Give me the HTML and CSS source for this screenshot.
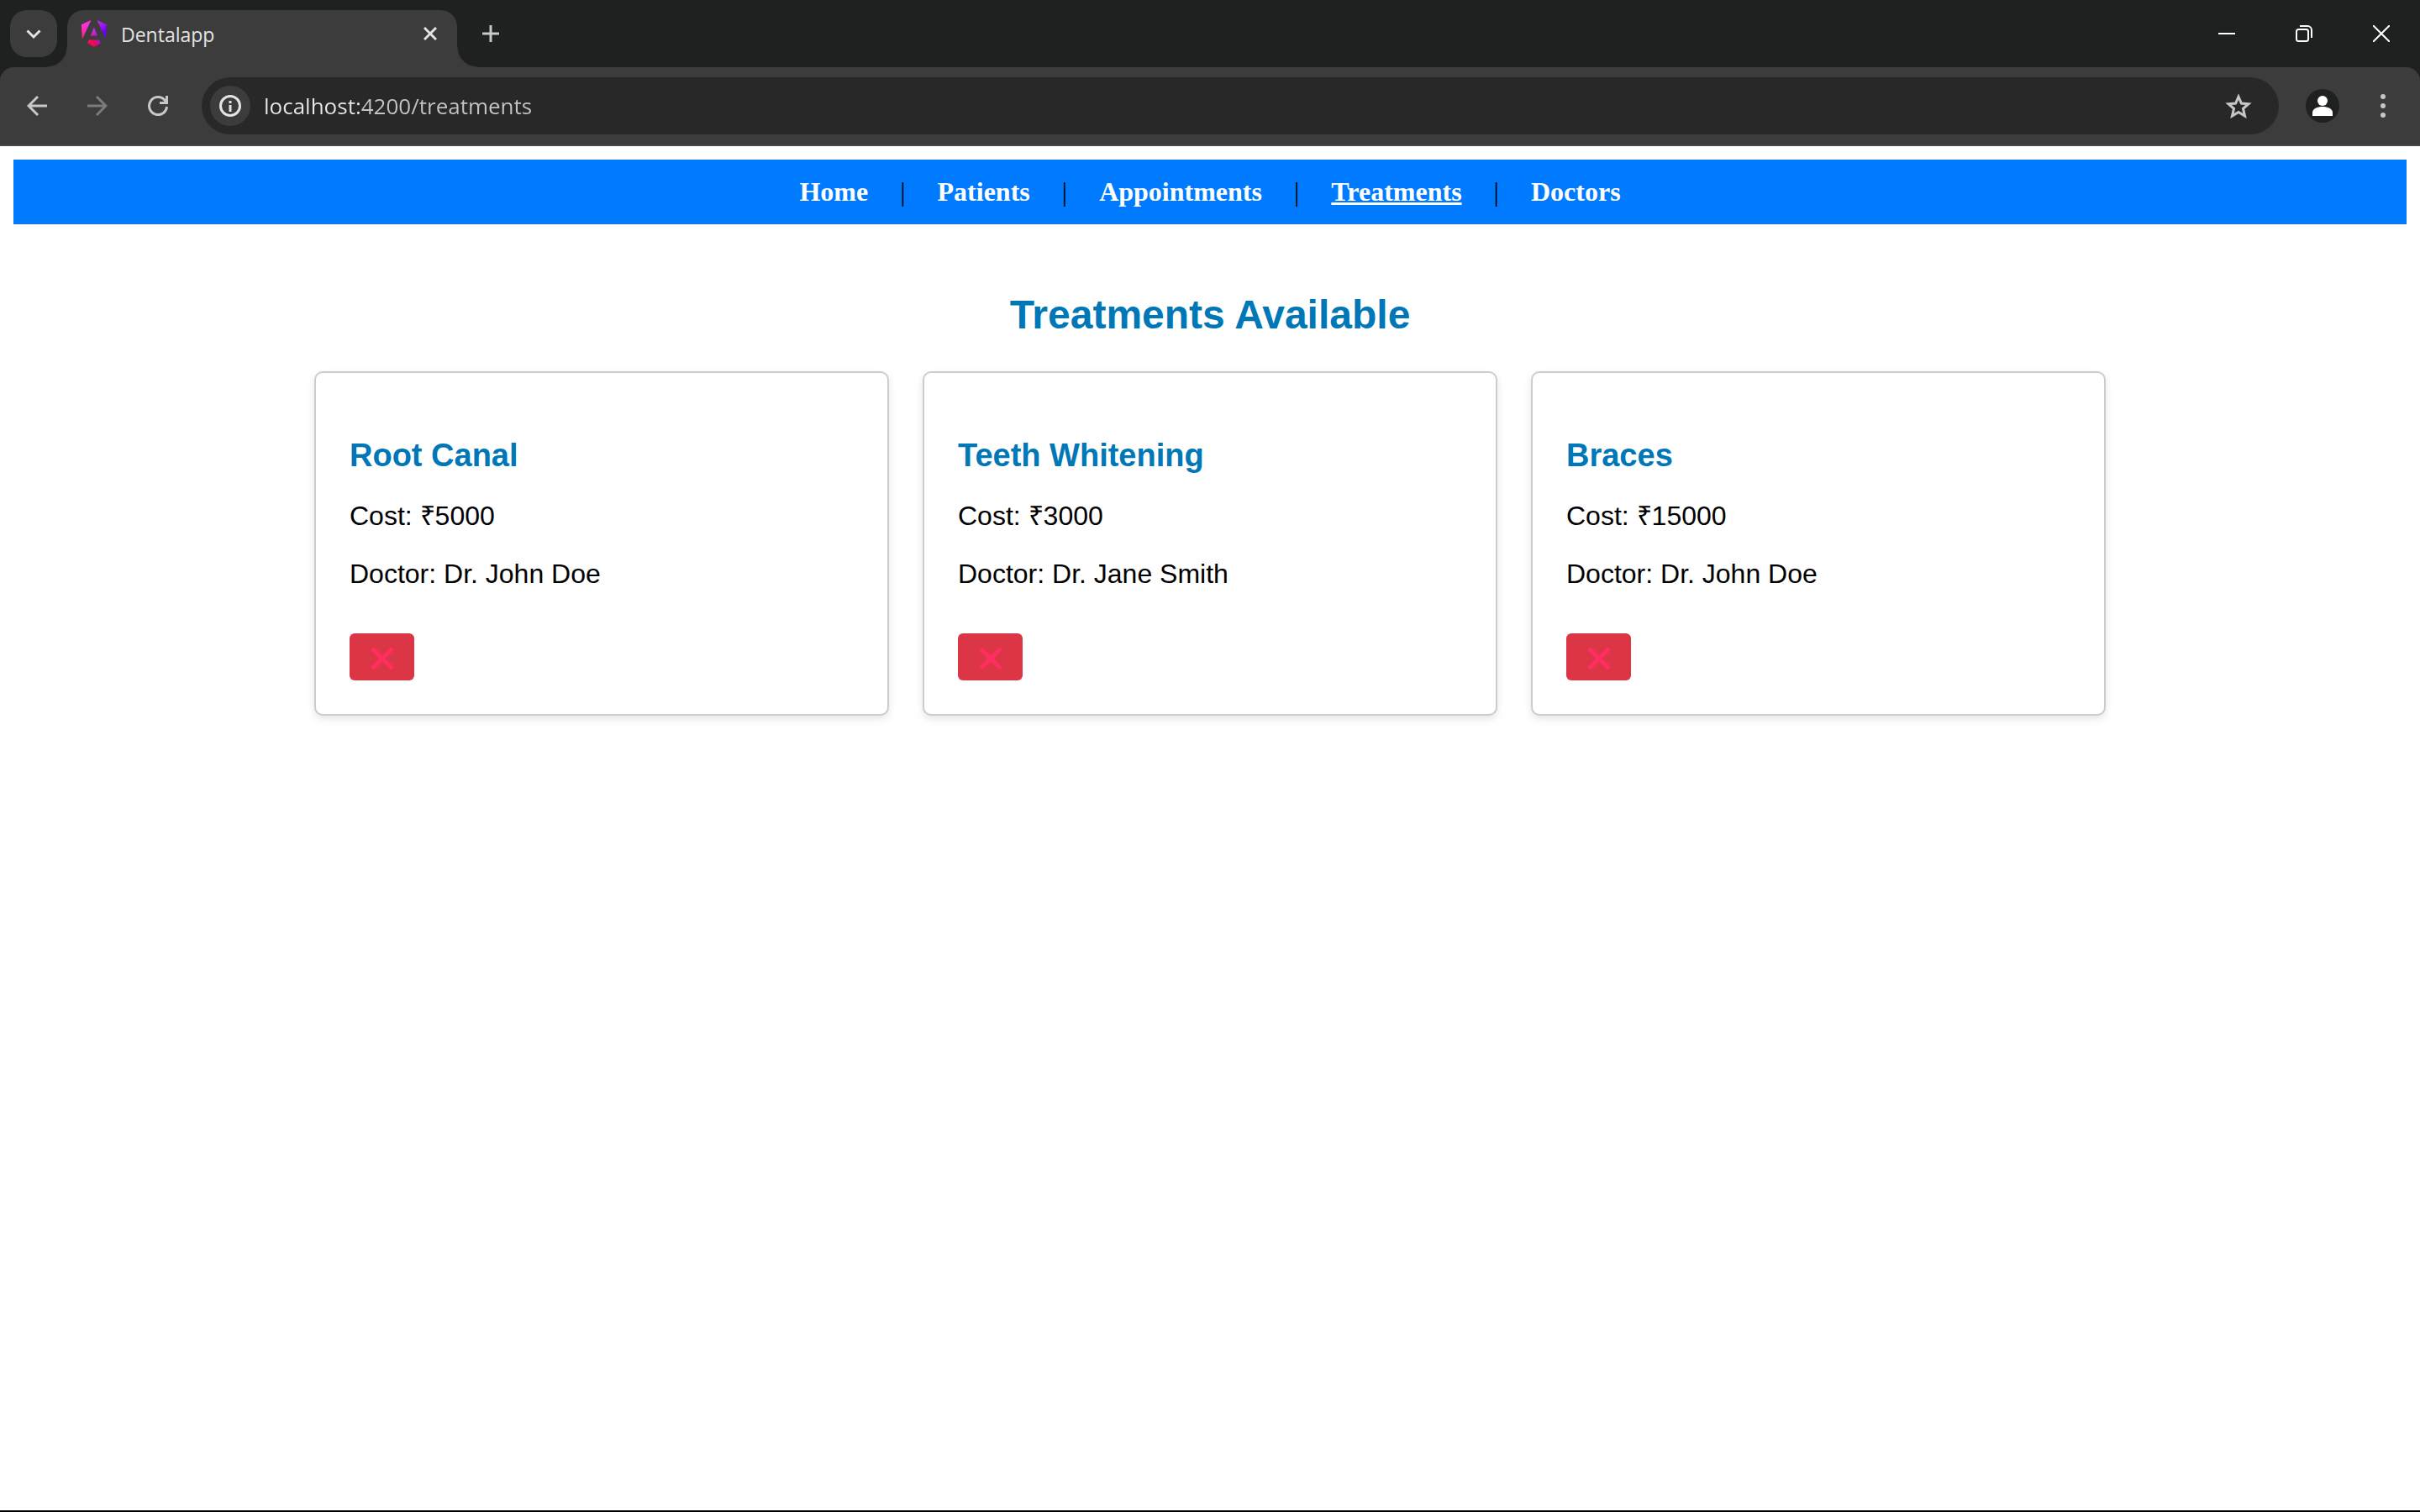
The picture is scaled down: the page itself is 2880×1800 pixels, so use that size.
FILE: index.html
```html
<!DOCTYPE html>
<html lang="en">
<head>
  <meta charset="utf-8">
  <title>Dentalapp</title>
  <link rel="stylesheet" href="styles.css">
</head>
<body>
  <div class="window">
    <header class="browser">
      <div class="tab-strip">
        <button class="tab-search" type="button" aria-label="Search tabs">
          <svg width="56" height="56" viewBox="0 0 56 56" fill="none" stroke="#e3e3e3" stroke-width="3"><path d="M20.500 24.500l7.500 7.500 7.500-7.500"/></svg>
        </button>
        <div class="tab">
          <svg class="favicon" width="32" height="32" viewBox="0 0 223 236">
            <defs>
              <linearGradient id="pink" x1="49" y1="226" x2="193" y2="130" gradientUnits="userSpaceOnUse">
                <stop stop-color="#e40035"/><stop offset=".24" stop-color="#f60a48"/><stop offset=".35" stop-color="#f20755"/><stop offset=".49" stop-color="#dc087d"/><stop offset=".74" stop-color="#9717e7"/><stop offset="1" stop-color="#6c00f5"/>
              </linearGradient>
              <linearGradient id="glow" x1="22" y1="28" x2="132" y2="160" gradientUnits="userSpaceOnUse">
                <stop stop-color="#ff31d9"/><stop offset="1" stop-color="#ff5be1" stop-opacity="0"/>
              </linearGradient>
            </defs>
            <path fill="url(#pink)" d="m222.077 39.192-8.019 125.923L137.387 0l84.690 39.192Zm-53.105 162.825-57.933 33.056-57.934-33.056 11.783-28.556h92.301l11.783 28.556ZM111.039 62.675l30.357 73.803H80.681l30.358-73.803ZM7.937 165.115 0 39.192 84.690 0 7.937 165.115Z"/>
            <path fill="url(#glow)" d="m222.077 39.192-8.019 125.923L137.387 0l84.690 39.192Zm-53.105 162.825-57.933 33.056-57.934-33.056 11.783-28.556h92.301l11.783 28.556ZM111.039 62.675l30.357 73.803H80.681l30.358-73.803ZM7.937 165.115 0 39.192 84.690 0 7.937 165.115Z"/>
          </svg>
          <span class="tab-title">Dentalapp</span>
          <button class="icon-button" type="button" aria-label="Close tab">
            <svg width="16" height="16" viewBox="0 0 16 16" stroke="#e3e3e3" stroke-width="3"><path d="M1 1l14 14M15 1L1 15"/></svg>
          </button>
        </div>
        <button class="icon-button new-tab" type="button" aria-label="New tab">
          <svg width="20" height="20" viewBox="0 0 20 20" stroke="#c7c7c7" stroke-width="3"><path d="M10 0v20M0 10h20"/></svg>
        </button>
        <div class="window-controls">
          <button class="caption-button" type="button" aria-label="Minimize">
            <svg width="20" height="20" viewBox="0 0 20 20" stroke="#fff" stroke-width="2"><path d="M0 10h20"/></svg>
          </button>
          <button class="caption-button" type="button" aria-label="Restore">
            <svg width="20" height="20" viewBox="0 0 20 20" fill="none" stroke="#fff" stroke-width="2"><rect x="1" y="5" width="14" height="14" rx="2.500"/><path d="M5 1h9a5 5 0 0 1 5 5v9"/></svg>
          </button>
          <button class="caption-button" type="button" aria-label="Close">
            <svg width="20" height="20" viewBox="0 0 20 20" stroke="#fff" stroke-width="2"><path d="M0 0l20 20M20 0L0 20"/></svg>
          </button>
        </div>
      </div>
      <div class="toolbar">
        <button class="icon-button" type="button" aria-label="Back">
          <svg width="24" height="24" viewBox="0 0 24 24" fill="none" stroke="#c7c7c7" stroke-width="3"><path d="M24 12H2M13 1L2 12l11 11"/></svg>
        </button>
        <button class="icon-button" type="button" aria-label="Forward">
          <svg width="24" height="24" viewBox="0 0 24 24" fill="none" stroke="#7b7b7b" stroke-width="3"><path d="M0 12h22M11 1l11 11-11 11"/></svg>
        </button>
        <button class="icon-button" type="button" aria-label="Reload">
          <svg width="24" height="24" viewBox="0 0 24 24" fill="none" stroke="#c7c7c7" stroke-width="3"><path d="M22.500 13A10.500 10.500 0 1 1 20 5.200l2 3"/><path d="M22.500 0v8.500H14"/></svg>
        </button>
        <div class="omnibox">
          <button class="site-info" type="button" aria-label="View site information">
            <svg width="26" height="26" viewBox="0 0 26 26" fill="none" stroke="#e3e3e3" stroke-width="3"><circle cx="13" cy="13" r="11.500"/><path d="M13 12v8M13 7v3"/></svg>
          </button>
          <input class="url" type="text" value="localhost:4200/treatments" aria-label="Address" spellcheck="false">
          <button class="icon-button" type="button" aria-label="Bookmark this page">
            <svg width="32" height="30" viewBox="0 0 32 30" fill="none" stroke="#c7c7c7" stroke-width="3"><path d="M16 4l3.400 8 8.600.700-6.500 5.700 2 8.600L16 22.400 8.500 27l2-8.600L4 12.700l8.600-.700z"/></svg>
          </button>
        </div>
        <button class="icon-button profile" type="button" aria-label="Profile">
          <svg width="40" height="40" viewBox="0 0 40 40"><circle cx="20" cy="20" r="20" fill="#1f2121"/><g fill="#fff"><circle cx="20" cy="14" r="6"/><path d="M8 32v-4c0-4.500 6-7 12-7s12 2.500 12 7v4z"/></g></svg>
        </button>
        <button class="icon-button" type="button" aria-label="Menu">
          <svg width="8" height="28" viewBox="0 0 8 28" fill="#c7c7c7"><circle cx="4" cy="3" r="3"/><circle cx="4" cy="14" r="3"/><circle cx="4" cy="25" r="3"/></svg>
        </button>
      </div>
    </header>

    <div class="page">
      <nav class="nav">
        <a class="nav-link" href="#home">Home</a> |
        <a class="nav-link" href="#patients">Patients</a> |
        <a class="nav-link" href="#appointments">Appointments</a> |
        <a class="nav-link active" href="#treatments" aria-current="page">Treatments</a> |
        <a class="nav-link" href="#doctors">Doctors</a>
      </nav>

      <main class="treatments">
        <h2 class="heading">Treatments Available</h2>
        <div class="cards">
          <article class="card">
            <h3 class="card-title">Root Canal</h3>
            <p class="card-text">Cost: ₹5000</p>
            <p class="card-text">Doctor: Dr. John Doe</p>
            <button class="delete" type="button" aria-label="Delete Root Canal">
              <svg width="28" height="28" viewBox="0 0 28 28" stroke="#ff2d60" stroke-width="5" stroke-linecap="round"><path d="M3.500 3.500l21 21M24.500 3.500l-21 21"/></svg>
            </button>
          </article>
          <article class="card">
            <h3 class="card-title">Teeth Whitening</h3>
            <p class="card-text">Cost: ₹3000</p>
            <p class="card-text">Doctor: Dr. Jane Smith</p>
            <button class="delete" type="button" aria-label="Delete Teeth Whitening">
              <svg width="28" height="28" viewBox="0 0 28 28" stroke="#ff2d60" stroke-width="5" stroke-linecap="round"><path d="M3.500 3.500l21 21M24.500 3.500l-21 21"/></svg>
            </button>
          </article>
          <article class="card">
            <h3 class="card-title">Braces</h3>
            <p class="card-text">Cost: ₹15000</p>
            <p class="card-text">Doctor: Dr. John Doe</p>
            <button class="delete" type="button" aria-label="Delete Braces">
              <svg width="28" height="28" viewBox="0 0 28 28" stroke="#ff2d60" stroke-width="5" stroke-linecap="round"><path d="M3.500 3.500l21 21M24.500 3.500l-21 21"/></svg>
            </button>
          </article>
        </div>
      </main>
    </div>
  </div>
</body>
</html>
```
FILE: styles.css
```css
* {
  box-sizing: border-box;
}

body {
  margin: 0;
  background: #fff;
}

button {
  margin: 0;
  padding: 0;
  border: 0;
  background: none;
  cursor: pointer;
}

svg {
  display: block;
}

.window {
  min-height: 100vh;
  border-bottom: 2px solid #000;
}

/* Browser frame */

.browser {
  background: #1f2121;
  font-family: "Open Sans", "Noto Sans", sans-serif;
}

.tab-strip {
  display: flex;
  align-items: center;
  height: 80px;
  padding-left: 12px;
}

.tab-search {
  width: 56px;
  height: 56px;
  border-radius: 20px;
  background: #3c3c3c;
}

.tab {
  position: relative;
  display: flex;
  align-items: center;
  align-self: flex-end;
  width: 464px;
  height: 68px;
  margin-left: 12px;
  padding: 0 24px 12px 16px;
  border-radius: 20px 20px 0 0;
  background: #3c3c3c;
}

/* Curved feet that join the tab to the toolbar */
.tab::before,
.tab::after {
  content: "";
  position: absolute;
  bottom: 0;
  width: 24px;
  height: 24px;
}

.tab::before {
  right: 100%;
  background: radial-gradient(circle at 0 0, transparent 23px, #3c3c3c 24px);
}

.tab::after {
  left: 100%;
  background: radial-gradient(circle at 100% 0, transparent 23px, #3c3c3c 24px);
}

.tab-title {
  flex: 1;
  margin-left: 16px;
  padding-top: 2px;
  color: #e3e3e3;
  font-size: 23px;
  line-height: 32px;
}

.icon-button {
  flex: none;
}

.new-tab {
  margin-left: 30px;
}

.window-controls {
  display: flex;
  margin-left: auto;
}

.caption-button {
  display: flex;
  align-items: center;
  justify-content: center;
  width: 92px;
  height: 80px;
}

.toolbar {
  display: flex;
  align-items: center;
  gap: 48px;
  height: 94px;
  padding: 0 40px 0 32px;
  border-bottom: 2px solid #474747;
  border-radius: 16px 16px 0 0;
  background: #3c3c3c;
}

.omnibox {
  display: flex;
  flex: 1;
  align-items: center;
  height: 68px;
  margin-left: -8px;
  padding: 0 32px 0 10px;
  border-radius: 34px;
  background: #282828;
}

.site-info {
  display: flex;
  flex: none;
  align-items: center;
  justify-content: center;
  width: 48px;
  height: 48px;
  border-radius: 50%;
  background: #3c3c3c;
}

.url {
  flex: 1;
  min-width: 0;
  height: 48px;
  margin: 0 16px;
  padding: 0;
  border: 0;
  outline: 0;
  background: linear-gradient(90deg, #e8e8e8 114px, #c4c4c4 114px);
  background-clip: text;
  -webkit-background-clip: text;
  color: transparent;
  font: 26px "Open Sans", "Noto Sans", sans-serif;
}

.profile {
  margin: 0 0 0 -16px;
}

/* Page */

.page {
  padding: 16px;
  color: #000;
  font-family: "Liberation Serif", "Times New Roman", serif;
  font-size: 32px;
  line-height: 37px;
}

.nav {
  padding: 20px;
  background: #007bff;
  text-align: center;
}

.nav-link {
  margin: 0 30px;
  color: #fff;
  font-weight: bold;
  text-decoration: none;
}

.nav-link.active {
  text-decoration: underline;
}

.treatments {
  padding: 40px;
  font-family: "Liberation Sans", Arial, sans-serif;
}

.heading {
  margin: 40px 0;
  color: #0077b6;
  font-size: 48px;
  line-height: 55px;
  text-align: center;
}

.cards {
  display: flex;
  flex-wrap: wrap;
  justify-content: center;
  gap: 40px;
}

.card {
  width: 684px;
  padding: 40px;
  border: 2px solid #ccc;
  border-radius: 10px;
  background: #fff;
  box-shadow: 0 4px 10px rgba(0, 0, 0, 0.1);
}

.card-title {
  margin: 37px 0 32px;
  color: #0077b6;
  font-size: 38px;
  line-height: 43px;
}

.card-text {
  margin: 32px 0;
}

.delete {
  display: flex;
  align-items: center;
  justify-content: center;
  width: 77px;
  height: 56px;
  margin-top: 52px;
  padding-top: 4px;
  border-radius: 6px;
  background: #dc3545;
}
```
